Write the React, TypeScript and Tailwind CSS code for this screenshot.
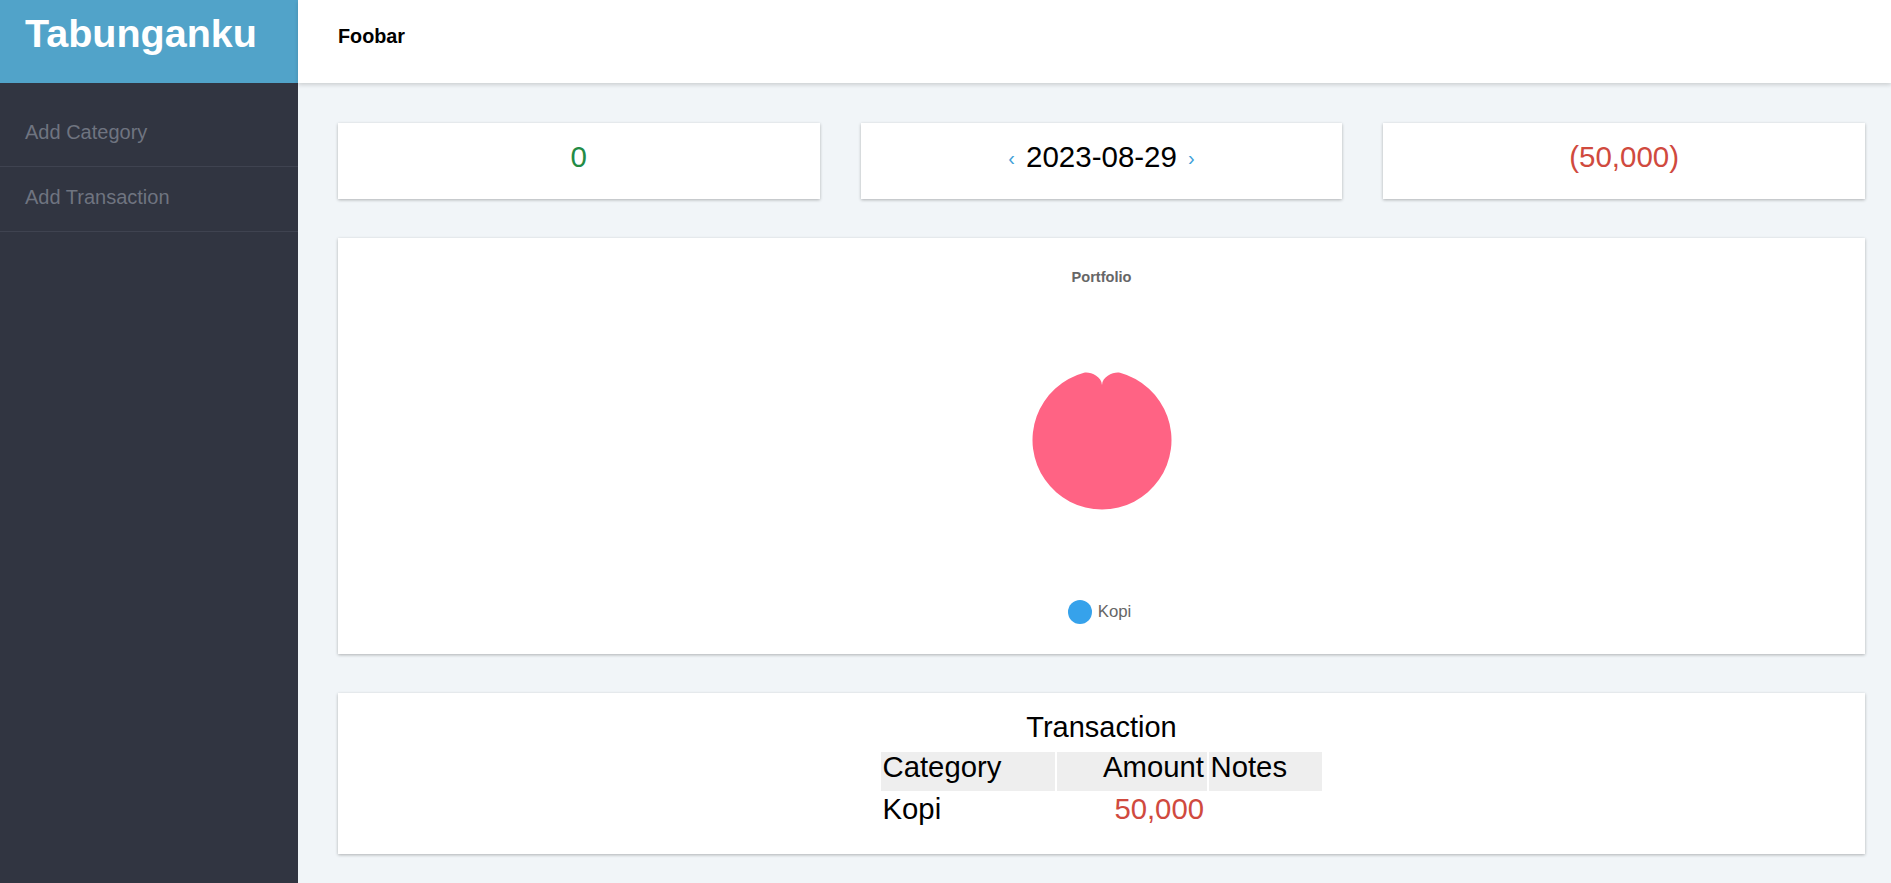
import React from 'react';

// Pie chart with a single slice (notch at the top where the slice starts/ends)
const PieChart: React.FC = () => {
  return (
    <svg width="140" height="140" viewBox="0 0 140 140">
      <path
        d="M 70 15 C 69.5 6, 57.4 1.43, 52 2.87 A 69.5 69.5 0 1 0 88 2.87 C 82.6 1.43, 70.5 6, 70 15 Z"
        fill="#ff6384"
      />
    </svg>
  );
};

const StatCard: React.FC<{ className?: string; children: React.ReactNode }> = ({ className = '', children }) => (
  <div
    className={`h-[76px] bg-white shadow-[0_1px_3px_rgba(0,0,0,0.28)] pt-[17px] flex justify-center items-start text-[29.5px] leading-[33px] ${className}`}
  >
    {children}
  </div>
);

const menu = ['Add Category', 'Add Transaction'];

export default function App() {
  return (
    <div className="flex h-[883px] w-full overflow-hidden bg-[#f1f5f8] font-['Liberation_Sans',Arial,sans-serif]">
      {/* Sidebar */}
      <aside className="w-[298px] shrink-0 bg-[#313541] flex flex-col">
        <div className="h-[83px] bg-[#51a3c9] pl-[25px] pt-[11px]">
          <h1 className="text-[39.5px] font-bold leading-[45px] text-white">Tabunganku</h1>
        </div>
        <nav className="pt-[19px]">
          {menu.map((item) => (
            <a
              key={item}
              href="#"
              className="block pl-[25px] pt-[19px] pb-[22px] text-[20px] leading-[23px] text-[#6f7480] border-b border-[#3f4350]"
            >
              {item}
            </a>
          ))}
        </nav>
      </aside>

      {/* Main */}
      <div className="flex-1 min-w-0 flex flex-col">
        <header className="relative z-10 h-[83px] shrink-0 bg-white pl-[40px] pt-[25px] shadow-[0_2px_4px_rgba(0,0,0,0.15)]">
          <span className="text-[19.8px] font-bold leading-[22px] text-black">Foobar</span>
        </header>

        <main className="pl-[40px] pr-[26px] pt-[40px] flex flex-col gap-[39px]">
          <div className="grid grid-cols-3 gap-x-[41px]">
            <StatCard className="text-[#238b45]">0</StatCard>
            <StatCard className="text-black">
              <span className="text-[20px] leading-[33px] text-[#3ea0d8] mt-[2px]">‹</span>
              <span className="mx-[11px]">2023-08-29</span>
              <span className="text-[20px] leading-[33px] text-[#3ea0d8] mt-[2px]">›</span>
            </StatCard>
            <StatCard className="text-[#d04a3e]">(50,000)</StatCard>
          </div>

          {/* Portfolio chart */}
          <div className="h-[416px] bg-white shadow-[0_1px_3px_rgba(0,0,0,0.28)] pt-[31px] flex flex-col items-center">
            <div className="text-[14.6px] font-bold leading-[17px] text-[#666666]">Portfolio</div>
            <div className="mt-[84px]">
              <PieChart />
            </div>
            <div className="mt-[90px] -ml-[4px] flex items-center gap-[6px]">
              <span className="w-[24px] h-[24px] rounded-full bg-[#36a2eb]" />
              <span className="text-[16.8px] leading-[24px] text-[#666666]">Kopi</span>
            </div>
          </div>

          {/* Transaction table */}
          <div className="h-[161px] bg-white shadow-[0_1px_3px_rgba(0,0,0,0.28)] pt-[18px] flex flex-col items-center text-black">
            <h2 className="text-[29px] leading-[33px]">Transaction</h2>
            <table className="mt-[6px] border-separate border-spacing-[2px] text-[29.3px]">
              <thead>
                <tr>
                  <th className="w-[174px] h-[39px] align-top px-[1.5px] text-left font-normal leading-[30px] bg-[#eeeeee]">Category</th>
                  <th className="w-[150px] h-[39px] align-top pl-[2px] pr-[3px] text-right font-normal leading-[30px] bg-[#eeeeee]">Amount</th>
                  <th className="w-[113px] h-[39px] align-top px-[1.5px] text-left font-normal leading-[30px] bg-[#eeeeee]">Notes</th>
                </tr>
              </thead>
              <tbody>
                <tr>
                  <td className="align-top px-[1.5px] leading-[32px]">Kopi</td>
                  <td className="align-top pl-[2px] pr-[3px] text-right leading-[32px] text-[#d04a3e]">50,000</td>
                  <td className="align-top px-[1.5px] leading-[32px]"></td>
                </tr>
              </tbody>
            </table>
          </div>
        </main>
      </div>
    </div>
  );
}
